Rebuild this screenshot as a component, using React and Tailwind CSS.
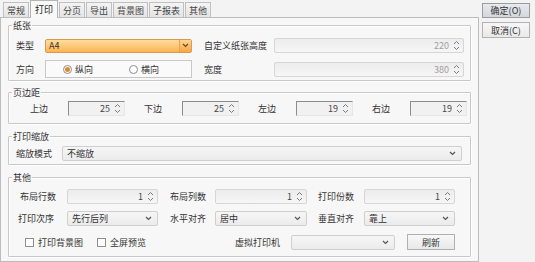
import React from 'react';

const tabs = ['常规', '打印', '分页', '导出', '背景图', '子报表', '其他'];

const SpinIcon = () => (
  <svg width="7" height="11" viewBox="0 0 7 11" className="shrink-0">
    <path d="M1 4 L3.5 1.5 L6 4" fill="none" stroke="#7a7a7a" strokeWidth="1" />
    <path d="M1 7 L3.5 9.5 L6 7" fill="none" stroke="#7a7a7a" strokeWidth="1" />
  </svg>
);

const Chevron = ({ color = '#555' }) => (
  <svg width="7" height="5" viewBox="0 0 7 5" className="shrink-0">
    <path d="M1 1 L3.5 3.5 L6 1" fill="none" stroke={color} strokeWidth="1.2" />
  </svg>
);

// spin box, light style (纸张 / 其他)
const Spin = ({ value, className = '', muted = false }) => (
  <div className={`flex items-center h-[15px] border border-[#d6d6d6] rounded-[2px] bg-gradient-to-b from-[#ececec] to-[#f6f6f6] pr-[3px] ${className}`}>
    <span className={`flex-1 text-right pr-[4px] ${muted ? 'text-[#a0a0a0]' : 'text-[#444]'}`}>{value}</span>
    <SpinIcon />
  </div>
);

// sunken spin box (页边距)
const SunkenSpin = ({ value }) => (
  <div className="flex items-center w-[57px] h-[15px] border-l border-t border-[#8c8c8c] border-r-[#e6e6e6] border-b-[#e6e6e6] border-r border-b bg-[#f1f1f1] pr-[3px]">
    <span className="flex-1 text-right pr-[4px] text-[#444]">{value}</span>
    <SpinIcon />
  </div>
);

const Select = ({ value, className = '' }) => (
  <div className={`flex items-center h-[15px] border border-[#cfcfcf] rounded-[2px] bg-gradient-to-b from-[#f6f6f6] to-[#ebebeb] pl-[4px] pr-[5px] ${className}`}>
    <span className="flex-1 text-[#333]">{value}</span>
    <Chevron />
  </div>
);

const Legend = ({ children }) => (
  <legend className="ml-[1px] px-[1px] leading-[11px] text-[#333]">{children}</legend>
);

const Radio = ({ checked, label }) => (
  <div className="flex items-center gap-[3px]">
    <span className="w-[9px] h-[9px] rounded-full border border-[#8c8c8c] bg-white flex items-center justify-center">
      {checked && <span className="w-[5px] h-[5px] rounded-full bg-[#e6862a]" />}
    </span>
    <span className="text-[#333]">{label}</span>
  </div>
);

const Check = ({ label }) => (
  <div className="flex items-center gap-[4px]">
    <span className="w-[9px] h-[9px] border border-[#8f8f8f] bg-white" />
    <span className="text-[#333]">{label}</span>
  </div>
);

const fieldset = 'border border-[#c8c8c8] shadow-[inset_1px_1px_0_#ffffff,1px_1px_0_#ffffff] rounded-[1px] pl-[2px]';

export default function App() {
  return (
    <div
      className="w-[535px] h-[262px] bg-[#f2f3f2] flex text-[9px] leading-[11px] text-[#333] overflow-hidden"
      style={{ fontFamily: '"Noto Sans CJK SC", "Noto Sans", sans-serif' }}
    >
      <div className="w-[479px] flex flex-col">
        {/* tabs */}
        <div className="h-[17px] flex items-end pl-[3px] gap-[1px] relative z-10">
          {tabs.map((t) =>
            t === '打印' ? (
              <div key={t} className="h-[18px] -mb-px px-[4px] flex items-center border border-b-0 border-[#b4b4b4] bg-[#f8f8f8] text-[#222]">
                {t}
              </div>
            ) : (
              <div key={t} className="h-[15px] px-[3px] flex items-center border border-b-0 border-[#c0c0c0] bg-gradient-to-b from-[#f4f4f4] to-[#e4e4e4] text-[#444]">
                {t}
              </div>
            )
          )}
        </div>

        {/* panel */}
        <div className="flex-1 border border-[#bcbcbc] bg-[#f7f7f7] px-[7px] pt-[2px]">
          {/* 纸张 */}
          <fieldset className={`${fieldset} pt-[7px] pb-[2px]`}>
            <Legend>纸张</Legend>
            <div className="flex items-center h-[15px] pl-[5px]">
              <span className="w-[29px]">类型</span>
              <div className="w-[147px] h-[14px] flex items-center border border-[#d89a52] rounded-[2px] bg-gradient-to-b from-[#ffdc9c] to-[#fbb44e] pl-[3px]">
                <span className="flex-1 text-[#333]">A4</span>
                <span className="w-[12px] h-[12px] flex items-center justify-center border-l border-[#e2a45c] bg-gradient-to-b from-[#ffd690] to-[#f7a63e]">
                  <Chevron color="#6b4a1e" />
                </span>
              </div>
              <span className="w-[82px] pl-[12px]">自定义纸张高度</span>
              <Spin value="220" muted className="w-[190px]" />
            </div>
            <div className="flex items-center h-[18px] mt-[7px] pl-[5px]">
              <span className="w-[29px]">方向</span>
              <div className="w-[147px] h-[18px] flex items-center border border-[#c8c8c8] bg-[#fafafa] pl-[17px]">
                <div className="w-[66px]">
                  <Radio checked label="纵向" />
                </div>
                <Radio label="横向" />
              </div>
              <span className="w-[82px] pl-[12px]">宽度</span>
              <Spin value="380" muted className="w-[190px]" />
            </div>
          </fieldset>

          {/* 页边距 */}
          <fieldset className={`${fieldset} mt-[6px] pt-[3px] pb-[7px]`}>
            <Legend>页边距</Legend>
            <div className="flex items-center h-[15px] pl-[19px]">
              <span className="w-[38px]">上边</span>
              <SunkenSpin value="25" />
              <span className="w-[38px] ml-[19px]">下边</span>
              <SunkenSpin value="25" />
              <span className="w-[38px] ml-[19px]">左边</span>
              <SunkenSpin value="19" />
              <span className="w-[38px] ml-[19px]">右边</span>
              <SunkenSpin value="19" />
            </div>
          </fieldset>

          {/* 打印缩放 */}
          <fieldset className={`${fieldset} mt-[7px] pt-[4px] pb-[3px]`}>
            <Legend>打印缩放</Legend>
            <div className="flex items-center h-[15px] pl-[5px]">
              <span className="w-[46px]">缩放模式</span>
              <Select value="不缩放" className="w-[400px]" />
            </div>
          </fieldset>

          {/* 其他 */}
          <fieldset className={`${fieldset} mt-[7px] pt-[6px] pb-[6px]`}>
            <Legend>其他</Legend>
            <div className="flex items-center h-[15px] pl-[7px]">
              <span className="w-[49px] pl-[2px]">布局行数</span>
              <Spin value="1" className="w-[91px]" />
              <span className="w-[57px] pl-[12px]">布局列数</span>
              <Spin value="1" className="w-[92px]" />
              <span className="w-[57px] pl-[11px]">打印份数</span>
              <Spin value="1" className="w-[91px]" />
            </div>
            <div className="flex items-center h-[15px] mt-[7px] pl-[7px]">
              <span className="w-[49px]">打印次序</span>
              <Select value="先行后列" className="w-[91px]" />
              <span className="w-[57px] pl-[12px]">水平对齐</span>
              <Select value="居中" className="w-[92px]" />
              <span className="w-[57px] pl-[11px]">垂直对齐</span>
              <Select value="靠上" className="w-[91px]" />
            </div>
            <div className="flex items-center h-[16px] mt-[8px] pl-[7px]">
              <div className="w-[79px] pl-[7px]">
                <Check label="打印背景图" />
              </div>
              <div className="w-[138px]">
                <Check label="全屏预览" />
              </div>
              <span className="w-[56px]">虚拟打印机</span>
              <Select value="" className="w-[104px]" />
              <div className="ml-[12px] w-[48px] h-[16px] flex items-center justify-center border border-[#b0b0b0] bg-gradient-to-b from-[#f8f8f8] to-[#e8e8e8] text-[#333]">
                刷新
              </div>
            </div>
          </fieldset>
        </div>
      </div>

      {/* right buttons */}
      <div className="flex flex-col pl-[3px] pt-[3px] gap-[4px]">
        <div className="w-[48px] h-[15px] flex items-center justify-center border border-[#9c9c9c] bg-gradient-to-b from-[#e6e9ee] to-[#d4d8de] text-[#333]">
          确定(O)
        </div>
        <div className="w-[48px] h-[16px] flex items-center justify-center border border-[#b2b2b2] bg-gradient-to-b from-[#f7f7f7] to-[#e9e9e9] text-[#333]">
          取消(C)
        </div>
      </div>
    </div>
  );
}
